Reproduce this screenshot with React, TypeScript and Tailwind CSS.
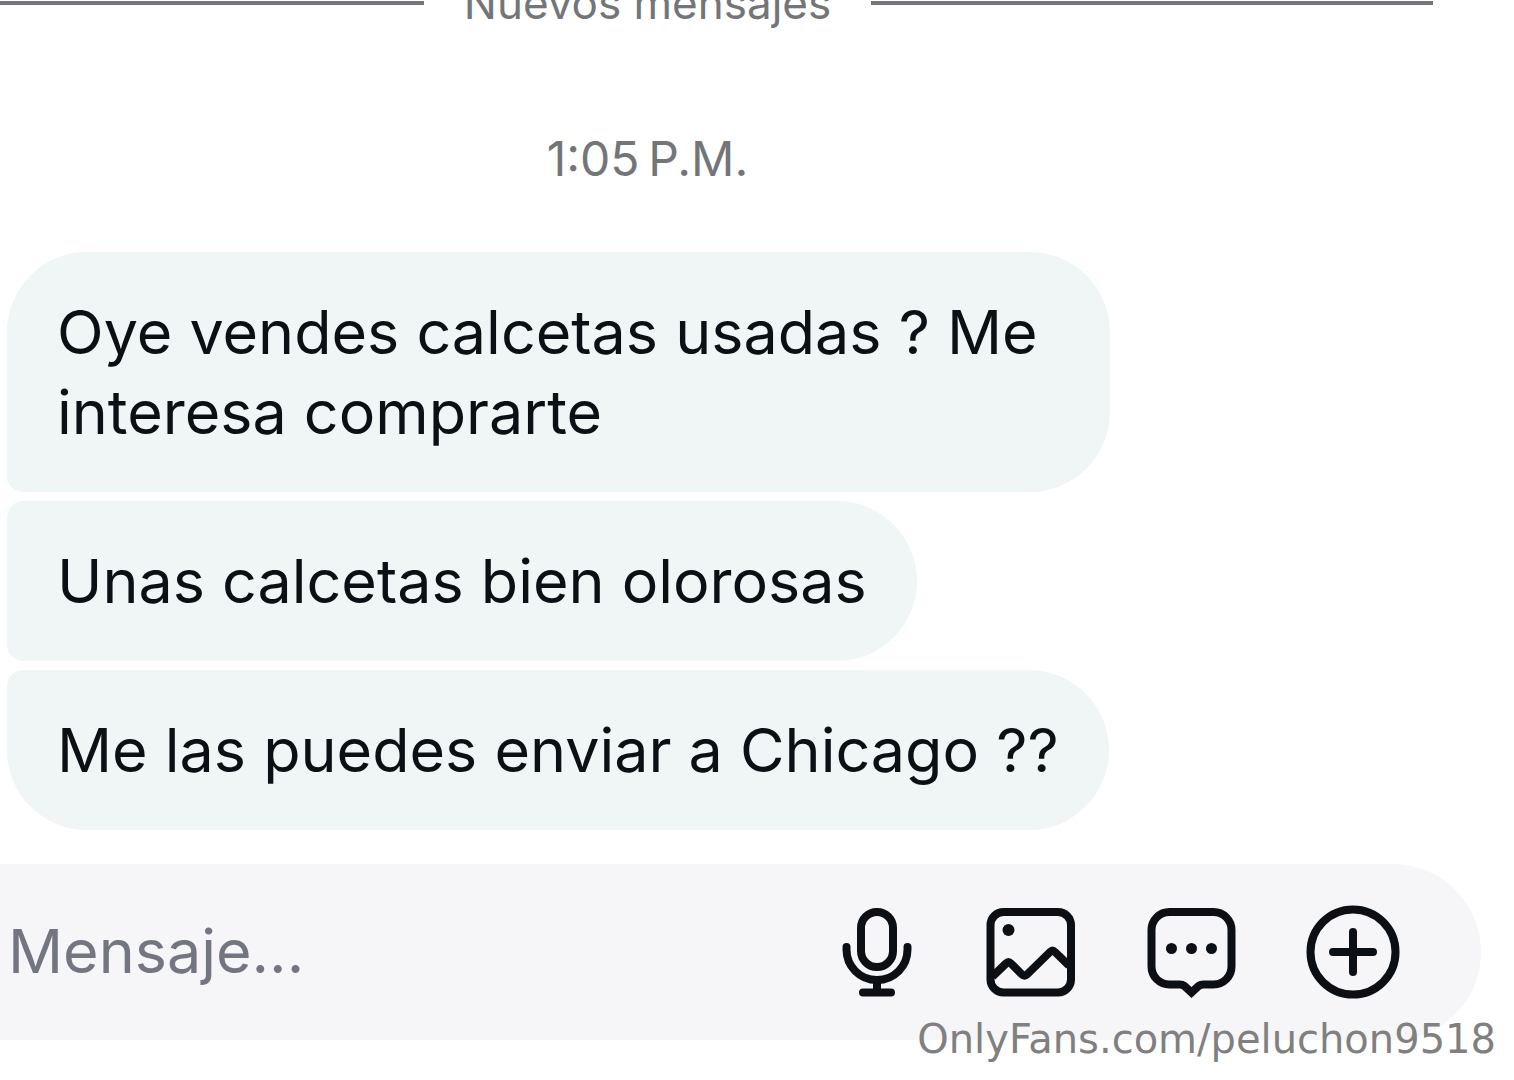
import type { ReactNode } from 'react';

interface Message { id: number; text: string; shape: string; }

const messages: Message[] = [
  { id: 1, text: 'Oye vendes calcetas usadas ? Me interesa comprarte', shape: 'rounded-[80px] rounded-bl-2xl' },
  { id: 2, text: 'Unas calcetas bien olorosas', shape: 'rounded-r-[80px] rounded-l-2xl' },
  { id: 3, text: 'Me las puedes enviar a Chicago ??', shape: 'rounded-[80px] rounded-tl-2xl' },
];

function IconButton({ label, children }: { label: string; children: ReactNode }) {
  return (
    <button type="button" aria-label={label} className="shrink-0 cursor-pointer">
      {children}
    </button>
  );
}

function MicIcon() {
  return (
    <svg className="h-24 w-20" viewBox="0 0 80 96" fill="none" stroke="currentColor" strokeWidth="8" strokeLinecap="round">
      <rect x="23" y="8" width="32" height="55" rx="16" />
      <path d="M8.5 43v2.5C8.5 62 21.5 76 39 76s30.5-14 30.5-30.5V43" />
      <path d="M39 77v12" strokeLinecap="butt" />
      <path d="M25 88.5h28" />
    </svg>
  );
}

function ImageIcon() {
  return (
    <svg className="size-24" viewBox="0 0 96 96" fill="none" stroke="currentColor" strokeWidth="8" strokeLinejoin="round">
      <rect x="7.5" y="8" width="80.5" height="80.5" rx="13" />
      <circle cx="25.5" cy="26" r="6" fill="currentColor" stroke="none" />
      <path d="M9.5 72.5 23 59.5Q25.5 57 28 59.5L39 70.5Q41.5 73 44 70.5L67 48Q69.5 45.5 72 48L86 61.5" />
    </svg>
  );
}

function ChatIcon() {
  return (
    <svg className="size-24" viewBox="0 0 96 96" fill="none" stroke="currentColor" strokeWidth="8">
      <path d="M25.5 8h44a18 18 0 0 1 18 18v36.5a18 18 0 0 1-18 18H59.5Q56.5 80.5 54.5 82L47.5 88.5 40.5 82Q38.5 80.5 35.5 80.5H25.5a18 18 0 0 1-18-18V26A18 18 0 0 1 25.5 8Z" />
      <g fill="currentColor" stroke="none">
        <circle cx="27.5" cy="44.5" r="5.5" />
        <circle cx="47.5" cy="44.5" r="5.5" />
        <circle cx="67.5" cy="44.5" r="5.5" />
      </g>
    </svg>
  );
}

function PlusIcon() {
  return (
    <svg className="size-24" viewBox="0 0 96 96" fill="none" stroke="currentColor" strokeWidth="8" strokeLinecap="round">
      <circle cx="48" cy="48" r="42.5" />
      <path d="M48 28v40M28 48h40" />
    </svg>
  );
}

export default function App() {
  return (
    <div className="relative min-h-screen overflow-hidden bg-white text-[#0c1014]" style={{ fontFamily: 'Inter, sans-serif' }}>
      {/* Unread divider */}
      <div className="-mt-[27px] mr-[81px] -ml-[138px] flex items-center gap-10 text-[44px] leading-[60px] text-[#737679]">
        <span className="h-1 flex-1 bg-[#737679]" />
        <span>Nuevos mensajes</span>
        <span className="h-1 flex-1 bg-[#737679]" />
      </div>
      <div className="mt-24 mr-[81px] -ml-[138px] text-center text-[48px] leading-[60px] text-[#737679]">
        <time>1:05{'\u202f'}P.M.</time>
      </div>

      <div className="mt-[63px] flex flex-col items-start gap-[9px] pl-[7px]">
        {messages.map(m => (
          <p key={m.id} className={`max-w-[1103px] bg-[#f0f5f6] px-[50px] py-10 text-[61px] leading-[80px] ${m.shape}`}>
            {m.text}
          </p>
        ))}
      </div>

      {/* Composer */}
      <form className="mt-[34px] mr-[33px] flex h-44 items-center gap-[65px] rounded-r-full bg-[#f6f6f8] pr-20 pl-2" onSubmit={e => e.preventDefault()}>
        <input
          type="text"
          aria-label="Mensaje"
          placeholder="Mensaje..."
          className="h-20 min-w-0 flex-1 bg-transparent text-[61px] outline-none placeholder:text-[#737680]"
        />
        <IconButton label="Grabar audio"><MicIcon /></IconButton>
        <IconButton label="Enviar imagen"><ImageIcon /></IconButton>
        <IconButton label="Respuestas"><ChatIcon /></IconButton>
        <IconButton label="Más opciones"><PlusIcon /></IconButton>
      </form>

      <div className="absolute right-[18px] bottom-[17px] text-[40px] leading-[48px] text-[#808080]" style={{ fontFamily: '"DejaVu Sans", sans-serif' }}>
        OnlyFans.com/peluchon9518
      </div>
    </div>
  );
}
